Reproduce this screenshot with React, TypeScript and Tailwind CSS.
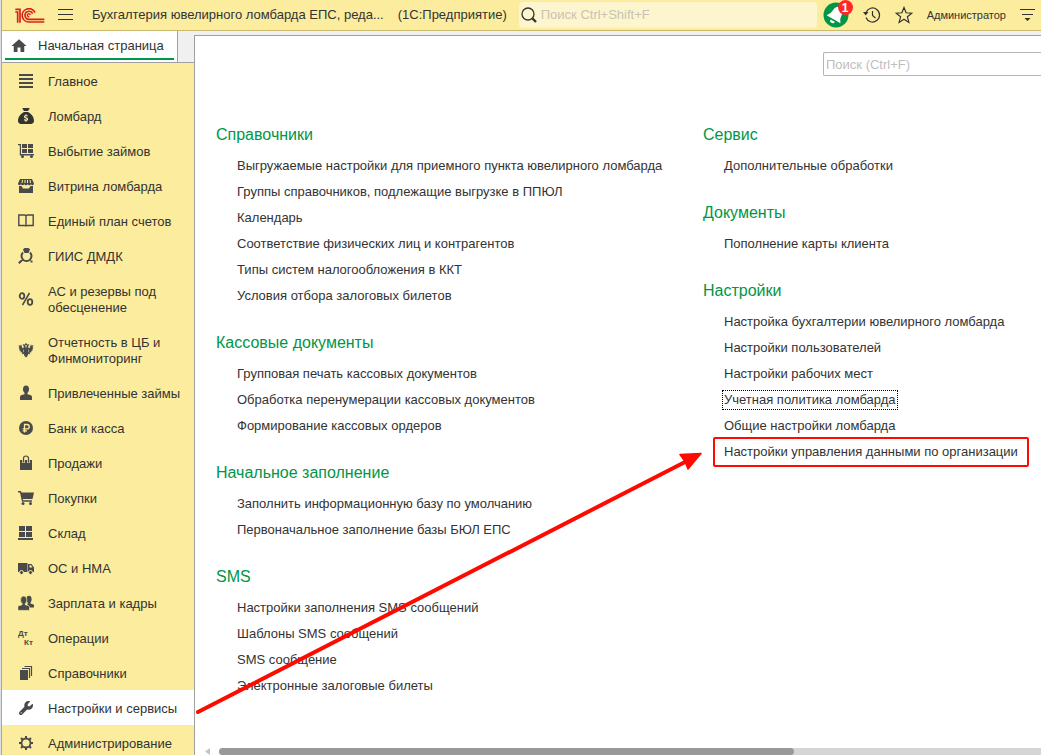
import type { ReactNode } from 'react'
import { FaSackDollar, FaWrench } from 'react-icons/fa6'
import { MdHome } from 'react-icons/md'

function Icon({ children }: { children: ReactNode }) {
  return (
    <svg viewBox="0 0 16 16" className="size-4" fill="currentColor" aria-hidden>
      {children}
    </svg>
  )
}

const icons = {
  lines: (
    <Icon>
      <path d="M1 1h14v2H1zM1 5h14v2H1zM1 9h14v2H1zM1 13h14v2H1z" />
    </Icon>
  ),
  bag: <FaSackDollar className="size-4 text-[#333]" />,
  cartBoxes: (
    <Icon>
      <path d="M0 1h3v10h13v1.500H1.800V2.300H0z" />
      <path d="M4 1h5v4H4zM10 1h5v4h-5zM4 6h5v4H4zM10 6h5v4h-5z" />
      <circle cx="4.500" cy="13.500" r="1.500" />
      <circle cx="13.500" cy="13.500" r="1.500" />
    </Icon>
  ),
  shop: (
    <Icon>
      <path d="M2 1h12l2 4.500c0 2-2.300 2.200-2.900.8-.6 1.300-2.800 1.300-3.400 0-.6 1.300-2.800 1.300-3.400 0-.6 1.300-2.800 1.300-3.400 0C2.300 7.700 0 7.500 0 5.500z" />
      <path d="M1 8h2.500l1.500 2.500h6L12.500 8H15v7H1z" />
      <path d="M4.500 2 4 5M7 2v3M9.500 2v3M12 2l.5 3" stroke="#fbec9e" strokeWidth="1" />
    </Icon>
  ),
  book: (
    <Icon>
      <path
        d="M.8 2h5.700q1.500 0 1.500 1.200Q8 2 9.500 2h5.700v10.500H9.500Q8 12.500 8 13.500q0-1-1.500-1H.8zM8 3v10"
        fill="none"
        stroke="currentColor"
        strokeWidth="1.400"
      />
    </Icon>
  ),
  ring: (
    <Icon>
      <path d="M5 1.500 6.500 0h4L12 1.500 10.500 5h-4z" />
      <path
        d="M5 4.500a5 5 0 1 0 7 0M4.500 11.500.8 15.200M12.500 13.500h2"
        fill="none"
        stroke="currentColor"
        strokeWidth="2"
      />
    </Icon>
  ),
  percent: (
    <Icon>
      <g fill="none" stroke="currentColor" strokeWidth="1.800">
        <ellipse cx="4" cy="5" rx="2.300" ry="2.800" />
        <ellipse cx="12" cy="11" rx="2.300" ry="2.800" />
        <path d="M11.500 2 4.500 14" strokeWidth="1.500" />
      </g>
    </Icon>
  ),
  eagle: (
    <Icon>
      <path d="M7 1.500h2v1.500H7zM4.500 3 6 2l1.500 1.500v2h1v-2L10 2l1.500 1-1.200.7v2l1.200.5 1.500-4 .5 1.500L15.500 3l-1 2.500 1 .3-1.300 1.700.8.500-1.800 1.300.3 1-2 .2.800 2-2-.8L9.500 14 8 15.500 6.500 14l-.8-2.300-2 .8.800-2-2-.2.300-1L1 8l.8-.5L.5 5.800l1-.3L.5 3l2 .7L3 2.200l1.500 4 1.200-.5v-2z" />
      <path d="M5.500 7.500v2.500M10.500 7.500v2.500" stroke="#fbec9e" strokeWidth=".5" />
    </Icon>
  ),
  person: (
    <Icon>
      <ellipse cx="8" cy="4.200" rx="3" ry="3.700" />
      <path d="M6.500 7h3v2.200l3.500 1q1 .5 1 2V15H2v-2.800q0-1.500 1-2l3.500-1z" />
    </Icon>
  ),
  ruble: (
    <Icon>
      <circle cx="8" cy="8" r="7" />
      <path
        d="M6.500 12.500V4.500H9a2.200 2.200 0 0 1 0 4.400H4.700M4.700 10.800H9"
        fill="none"
        stroke="#fbec9e"
        strokeWidth="1.300"
      />
    </Icon>
  ),
  shopping: (
    <Icon>
      <path d="M2 5h12v10H2z" />
      <path d="M5.500 8V3.500a2.500 2.500 0 0 1 5 0V8" fill="none" stroke="#fbec9e" strokeWidth="2.600" />
      <path d="M5.500 7.500V3.500a2.500 2.500 0 0 1 5 0v4" fill="none" stroke="currentColor" strokeWidth="1.200" />
    </Icon>
  ),
  cart: (
    <Icon>
      <path d="M0 1h3l.5 1.500H16L14.500 9H4.800l.3 1.300H14v1.400H4L2 2.400H0z" />
      <circle cx="5" cy="13.500" r="1.500" />
      <circle cx="12.500" cy="13.500" r="1.500" />
    </Icon>
  ),
  stock: (
    <Icon>
      <path d="M1 1h6v5H1zM8 1h6v5H8zM1 7h6v5H1zM8 7h6v5H8zM0 13h15v2H0z" />
    </Icon>
  ),
  truck: (
    <Icon>
      <path d="M0 3h9.500v9H0zM10 4h3.500L16 7.500V12h-6z" />
      <path d="M11.500 5.300h1.600l1.300 2.200h-2.900z" fill="#fbec9e" />
      <g stroke="#fbec9e">
        <circle cx="3.500" cy="12.500" r="2" />
        <circle cx="12.500" cy="12.500" r="2" />
      </g>
    </Icon>
  ),
  people: (
    <Icon>
      <ellipse cx="11" cy="4.200" rx="2.600" ry="3.400" />
      <path d="M10 6.500h2.500v2l3 1q.7.400.7 1.500v1.500H9z" />
      <path
        d="M4.300 7.500h2.800v2.200l3.500 1q.9.400.9 1.700v3H-.2v-3q0-1.300.9-1.700l3.600-1z"
        stroke="#fbec9e"
        strokeWidth=".7"
      />
      <ellipse cx="5.700" cy="5" rx="3.200" ry="4" stroke="#fbec9e" strokeWidth=".7" />
      <path d="M4.600 7h2.200v3.500H4.600z" />
    </Icon>
  ),
  dtkt: (
    <Icon>
      <g fontFamily="Liberation Sans, sans-serif" fontWeight="700" fontSize="8">
        <text x="0" y="6">Дт</text>
        <text x="6" y="15">Кт</text>
      </g>
    </Icon>
  ),
  books: (
    <Icon>
      <path d="M2 5h8v10H2z" />
      <path d="M4 3.500h7.500V13M6.500 1.500h7V11" fill="none" stroke="currentColor" strokeWidth="1.200" />
    </Icon>
  ),
  wrench: <FaWrench className="size-[14px]" />,
  gear: (
    <Icon>
      <circle cx="8" cy="8" r="4.500" fill="none" stroke="currentColor" strokeWidth="1.800" />
      <path
        d="M8 1v3M8 12v3M1 8h3M12 8h3M3 3l2 2M11 11l2 2M13 3l-2 2M5 11l-2 2"
        stroke="currentColor"
        strokeWidth="2"
      />
    </Icon>
  ),
}

const menu: { label: string; icon: keyof typeof icons; active?: boolean }[] = [
  { label: 'Главное', icon: 'lines' },
  { label: 'Ломбард', icon: 'bag' },
  { label: 'Выбытие займов', icon: 'cartBoxes' },
  { label: 'Витрина ломбарда', icon: 'shop' },
  { label: 'Единый план счетов', icon: 'book' },
  { label: 'ГИИС ДМДК', icon: 'ring' },
  { label: 'АС и резервы под обесценение', icon: 'percent' },
  { label: 'Отчетность в ЦБ и Финмониторинг', icon: 'eagle' },
  { label: 'Привлеченные займы', icon: 'person' },
  { label: 'Банк и касса', icon: 'ruble' },
  { label: 'Продажи', icon: 'shopping' },
  { label: 'Покупки', icon: 'cart' },
  { label: 'Склад', icon: 'stock' },
  { label: 'ОС и НМА', icon: 'truck' },
  { label: 'Зарплата и кадры', icon: 'people' },
  { label: 'Операции', icon: 'dtkt' },
  { label: 'Справочники', icon: 'books' },
  { label: 'Настройки и сервисы', icon: 'wrench', active: true },
  { label: 'Администрирование', icon: 'gear' },
]

type Section = { title: string; links: string[] }

const leftSections: Section[] = [
  {
    title: 'Справочники',
    links: [
      'Выгружаемые настройки для приемного пункта ювелирного ломбарда',
      'Группы справочников, подлежащие выгрузке в ППЮЛ',
      'Календарь',
      'Соответствие физических лиц и контрагентов',
      'Типы систем налогообложения в ККТ',
      'Условия отбора залоговых билетов',
    ],
  },
  {
    title: 'Кассовые документы',
    links: [
      'Групповая печать кассовых документов',
      'Обработка перенумерации кассовых документов',
      'Формирование кассовых ордеров',
    ],
  },
  {
    title: 'Начальное заполнение',
    links: [
      'Заполнить информационную базу по умолчанию',
      'Первоначальное заполнение базы БЮЛ ЕПС',
    ],
  },
  {
    title: 'SMS',
    links: [
      'Настройки заполнения SMS сообщений',
      'Шаблоны SMS сообщений',
      'SMS сообщение',
      'Электронные залоговые билеты',
    ],
  },
]

const rightSections: Section[] = [
  { title: 'Сервис', links: ['Дополнительные обработки'] },
  { title: 'Документы', links: ['Пополнение карты клиента'] },
  {
    title: 'Настройки',
    links: [
      'Настройка бухгалтерии ювелирного ломбарда',
      'Настройки пользователей',
      'Настройки рабочих мест',
      'Учетная политика ломбарда',
      'Общие настройки ломбарда',
      'Настройки управления данными по организации',
    ],
  },
]

const focusedLink = 'Учетная политика ломбарда'
const markedLink = 'Настройки управления данными по организации'

function Sections({ items }: { items: Section[] }) {
  return (
    <div className="flex flex-col gap-5">
      {items.map((section) => (
        <section key={section.title}>
          <h2 className="mb-1 text-base leading-7 text-[#009646]">{section.title}</h2>
          <ul className="pl-5">
            {section.links.map((link) => (
              <li key={link} className="flex h-[26px] items-center">
                <a
                  href="#"
                  className={`relative whitespace-nowrap px-px leading-[18px] ${
                    link === focusedLink ? 'outline-1 outline-dotted outline-black' : ''
                  }`}
                >
                  {link}
                  {link === markedLink && (
                    <span className="absolute -inset-x-2.5 -inset-y-1.5 border-2 border-[#ff0a00] rounded-xs" />
                  )}
                </a>
              </li>
            ))}
          </ul>
        </section>
      ))}
    </div>
  )
}

function Header() {
  return (
    <header className="flex h-[31px] shrink-0 items-center border-b border-[#c8b96e] bg-[#fbec9e] pl-[13px]">
      <svg viewBox="0 0 90 45" className="h-[15px] w-[30px] shrink-0" fill="none" stroke="#d9201a" strokeWidth="5" aria-label="1С">
        <path d="M1 12h7v32M1 4h14v40" />
        <path d="M60 14A20 20 0 1 0 42 42h46" />
        <path d="M53 17A12 12 0 1 0 42 34h46" />
        <path d="M46 21a4.500 4.500 0 1 0-3 5" strokeWidth="4" />
      </svg>
      <button aria-label="Меню" className="ml-3">
        <svg viewBox="0 0 16 12" className="h-3 w-4" stroke="#333" aria-hidden>
          <path d="M1 .5h15M1 5.500h15M1 10.500h15" />
        </svg>
      </button>
      <div className="ml-[19px] flex shrink-0 gap-3.5 whitespace-nowrap">
        <span>Бухгалтерия ювелирного ломбарда ЕПС, реда...</span>
        <span>(1С:Предприятие)</span>
      </div>
      <label className="ml-3 flex h-[26px] flex-1 items-center gap-1 rounded-sm bg-[#fdf5cd] px-0.5">
        <svg viewBox="0 0 16 16" className="size-4 shrink-0" fill="none" stroke="#333" aria-hidden>
          <circle cx="7" cy="7" r="6" strokeWidth="1.300" />
          <path d="m11.500 11.500 3.500 3.500" strokeWidth="2.400" />
        </svg>
        <input
          aria-label="Поиск"
          placeholder="Поиск Ctrl+Shift+F"
          className="min-w-0 flex-1 bg-transparent placeholder:text-[#c8c3b4] outline-none"
        />
      </label>
      <div className="ml-1.5 flex shrink-0 items-center gap-3.5 pr-1.5">
        <button aria-label="Уведомления" className="relative">
          <svg viewBox="0 0 26 26" className="size-[26px]" aria-hidden>
            <circle cx="13" cy="13" r="12.500" fill="#009646" />
            <g fill="#fff" transform="rotate(30 13 13)">
              <path d="M13 4q5 1 5 6.500 0 4.500 3 7.500H5q3-3 3-7.500Q8 5 13 4z" />
              <path d="M10.500 19.500h5a2.500 2.500 0 0 1-5 0z" />
            </g>
          </svg>
          <span className="absolute -right-1 -top-0.5 flex size-[15px] items-center justify-center rounded-full bg-[#ff2828] text-xs font-bold text-white">
            1
          </span>
        </button>
        <button aria-label="История" className="shrink-0">
          <svg viewBox="0 0 18 18" className="size-[18px]" fill="none" stroke="#333" strokeWidth="1.200" aria-hidden>
            <path d="M3 6.500a7 7 0 1 1 0 5M9.500 5v4.500l3 2.500" />
            <path d="M0 6h5.500L2.700 9.500z" fill="#333" stroke="none" />
          </svg>
        </button>
        <button aria-label="Избранное" className="shrink-0">
          <svg viewBox="0 0 18 18" className="size-[18px]" fill="none" stroke="#333" strokeWidth="1.200" aria-hidden>
            <path d="m9 1.500 2.100 5.300 5.700.4-4.400 3.600 1.500 5.600L9 13.300l-4.900 3.100 1.500-5.600L1.200 7.200l5.700-.4z" />
          </svg>
        </button>
        <button className="text-[11px]">Администратор</button>
        <button aria-label="Настройки окна" className="shrink-0">
          <svg viewBox="0 0 15 14" className="h-3.5 w-[15px]" aria-hidden>
            <path d="M0 1.500h15M2 6.500h11" stroke="#333" strokeWidth="1.200" />
            <path d="M4.500 10h6l-3 3z" fill="#333" />
          </svg>
        </button>
      </div>
    </header>
  )
}

export default function App() {
  return (
    <div className="flex h-screen overflow-hidden bg-[#f0f0f0] font-['Liberation_Sans',Arial,sans-serif] text-[13px] text-[#333]">
      <div className="w-0.5 shrink-0 border-r border-[#a8a8a8] bg-[#dcdfe4]" />
      <div className="flex min-w-0 flex-1 flex-col">
        <Header />
        <div className="flex min-h-0 flex-1">
          <aside className="flex w-48 shrink-0 flex-col">
            <div className="flex h-8 shrink-0 border-b border-[#a0a0a0]">
              <button className="flex w-44 border-r border-[#a0a0a0] bg-white px-[3px] pb-0.5">
                <span className="flex flex-1 items-center gap-2.5 self-stretch border-b-2 border-[#009646] pl-[5px] pt-[3px]">
                  <MdHome className="size-[18px] shrink-0 text-[#4a4a4a]" />
                  Начальная страница
                </span>
              </button>
            </div>
            <nav className="flex-1 overflow-hidden bg-[#fbec9e]">
              {menu.map((item) => (
                <button
                  key={item.label}
                  className={`flex w-full items-center gap-3.5 pb-2 pl-4 pr-2 pt-[9px] text-left leading-4 ${
                    item.active ? 'bg-white' : ''
                  }`}
                >
                  <span className="flex h-4 w-4 shrink-0 items-center justify-center text-[#4a4a4a]">
                    {icons[item.icon]}
                  </span>
                  <span className="flex-1 pt-0.5">{item.label}</span>
                </button>
              ))}
            </nav>
          </aside>

          <main className="relative mt-1 flex min-w-0 flex-1 flex-col border-l border-t border-[#a0a0a0] bg-white">
            <div className="flex justify-end pt-4">
              <input
                aria-label="Поиск по разделу"
                placeholder="Поиск (Ctrl+F)"
                className="h-6 w-[218px] rounded-l-xs border border-r-0 border-[#b4b4b4] px-0.5 outline-none placeholder:text-[#bebebe]"
              />
            </div>
            <div className="mt-[45px] grid min-h-0 flex-1 grid-cols-[487px_1fr] content-start overflow-hidden pl-[21px]">
              <Sections items={leftSections} />
              <Sections items={rightSections} />
            </div>
            <div className="flex h-[7px] shrink-0 items-center gap-2 pl-2.5">
              <svg viewBox="0 0 6 7" className="h-[7px] w-1.5" fill="#c4c4c4" aria-hidden>
                <path d="M5 0v7L0 3.500z" />
              </svg>
              <div className="h-full flex-1 rounded-l-full bg-[#d5d5d5]">
                <div className="h-full w-[70%] rounded-full bg-[#999]" />
              </div>
            </div>

            {/* pointer from the active menu item to the marked link */}
            <svg
              viewBox="0 0 510 264"
              className="pointer-events-none absolute left-0 top-[416px] h-[264px] w-[510px]"
              aria-hidden
            >
              <path d="M3 260 492 9" stroke="#ff0a00" strokeWidth="4" strokeLinecap="round" />
              <path d="M506 1.500 485 2.500 490 9.500 493 17z" fill="#ff0a00" stroke="#ff0a00" strokeWidth="1.500" strokeLinejoin="round" />
            </svg>
          </main>
        </div>
      </div>
    </div>
  )
}
